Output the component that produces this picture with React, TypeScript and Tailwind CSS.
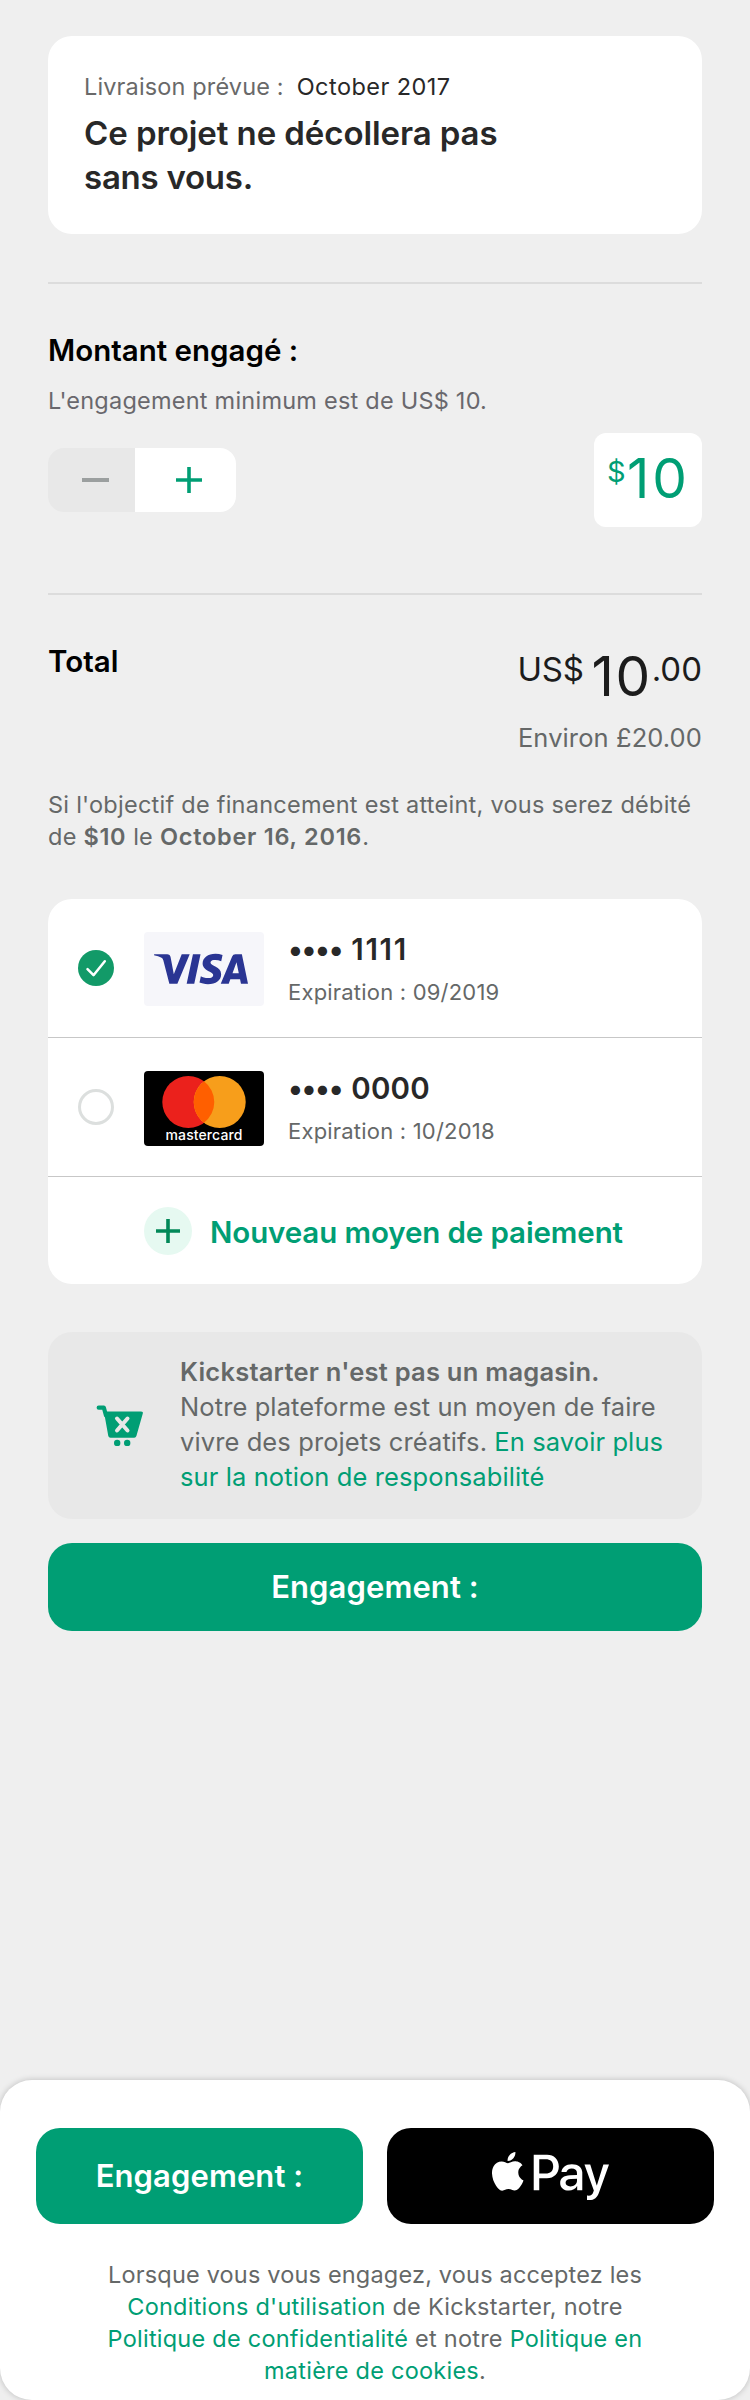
import type { ReactNode } from "react";
import { FaApplePay } from "react-icons/fa";
import { SiVisa } from "react-icons/si";

function Line({ className = "", children }: { className?: string; children: ReactNode }) {
  return <span className={`block whitespace-nowrap ${className}`}>{children}</span>;
}

function Link({ children }: { children: ReactNode }) {
  return <a className="text-[#009e74]">{children}</a>;
}

function CheckedIcon() {
  return (
    <svg className="size-9" viewBox="0 0 36 36" fill="none">
      <circle cx="18" cy="18" r="18" fill="#129a68" />
      <path d="M9.500 19.200 15.500 25.200 26.800 11.200" stroke="#fff" strokeWidth="2.500" strokeLinecap="round" strokeLinejoin="round" />
    </svg>
  );
}

function CartIcon() {
  return (
    <svg className="h-[42px] w-[48px]" viewBox="0 0 48 42" fill="none">
      <path d="M2.700 2.700h5.200l2 7.500" stroke="#009e74" strokeWidth="4.200" strokeLinecap="round" strokeLinejoin="round" />
      <path d="M7.900 6.500H45Q47.400 6.600 46.800 8.500L40.400 31Q39.900 32.700 38.200 32.700H14.500Q12.700 32.700 12.300 31Z" fill="#009e74" />
      <path d="M21 13.500 31.500 25.500M31.500 13.500 21 25.500" stroke="#e8e8e8" strokeWidth="4" strokeLinecap="round" />
      <circle cx="21.200" cy="37.900" r="3.200" fill="#009e74" />
      <circle cx="31.200" cy="37.900" r="3.200" fill="#009e74" />
    </svg>
  );
}

function VisaCard() {
  return (
    <div className="flex h-[74px] w-[120px] items-center justify-center rounded bg-[#f6f6fa] pr-[6px]">
      <SiVisa className="size-[94px] text-[#2a3593]" />
    </div>
  );
}

function MasterCard() {
  return (
    <div className="flex h-[75px] w-[120px] flex-col items-center rounded bg-black pt-[5px]">
      <svg className="h-[52px] w-[84px] shrink-0" viewBox="0 0 84 52">
        <circle cx="26.300" cy="26" r="26" fill="#eb211c" />
        <circle cx="57.700" cy="26" r="26" fill="#f79e1b" />
        <path d="M42 5.300a26 26 0 0 1 0 41.400a26 26 0 0 1 0-41.400Z" fill="#ff5f00" />
      </svg>
      <span className="-mt-px text-[14px] leading-[15px] font-medium tracking-[0.100px] text-white">mastercard</span>
    </div>
  );
}

function PaymentRow({ selected, card, digits, expiration }: { selected?: boolean; card: ReactNode; digits: ReactNode; expiration: string }) {
  return (
    <div className="flex h-[139px] border-b border-[#c7c7c7] pl-[30px]">
      <div className="mt-[51px] size-9">
        {selected ? <CheckedIcon /> : <div className="size-9 rounded-full border-[3.500px] border-[#dcdfde]" />}
      </div>
      <div className="mt-[33px] ml-[30px]">{card}</div>
      <div className="ml-6 pt-8">
        <div className="flex text-[29.500px] leading-9 font-semibold whitespace-nowrap text-[#282828]">
          <span className="mr-[9px] tracking-[-1.300px]">••••</span>
          {digits}
        </div>
        <Line className="mt-[11px] text-[22px] leading-7 tracking-[0.200px] text-[#656868]">Expiration : {expiration}</Line>
      </div>
    </div>
  );
}

export default function App() {
  return (
    <div className="flex h-[2400px] w-[750px] flex-col bg-[#efefef] font-[Inter,sans-serif]">
      <main className="flex flex-1 flex-col px-12 pt-9">
        <section className="h-[198px] rounded-3xl bg-white pt-[35px] pl-9">
          <div className="flex gap-[13px] text-[23.500px] leading-8 whitespace-nowrap">
            <span className="tracking-[0.140px] text-[#696969]">Livraison prévue :</span>
            <span className="tracking-[0.450px] text-[#282828]">October 2017</span>
          </div>
          <h1 className="mt-2 text-[33px] leading-[44px] font-semibold tracking-[-0.080px] text-[#282828]">
            <Line>Ce projet ne décollera pas</Line>
            <Line className="tracking-[-0.250px]">sans vous.</Line>
          </h1>
        </section>

        <hr className="mt-12 h-0.5 border-0 bg-[#dcdcdc]" />

        <section className="mt-12">
          <h2 className="text-[29.500px] leading-9 font-semibold text-black">Montant engagé :</h2>
          <Line className="mt-[17px] text-[23.500px] leading-8 tracking-[0.230px] text-[#69686d]">L'engagement minimum est de US$ 10.</Line>
          <div className="mt-4 flex items-center justify-between">
            <div className="flex h-16 w-[188px] overflow-hidden rounded-2xl">
              <button className="flex w-[87px] items-center bg-[#e8e8e8] pl-[34px]">
                <span className="h-1 w-[27px] bg-[#9b9f9f]" />
              </button>
              <button className="flex flex-1 items-center bg-white pl-[41px]">
                <svg className="size-[26px]" viewBox="0 0 26 26" stroke="#009e74" strokeWidth="3.600">
                  <path d="M0 13H26M13 0V26" />
                </svg>
              </button>
            </div>
            <div className="flex h-[94px] w-[108px] items-start rounded-xl bg-white pt-[15px] pl-[13px] text-[#009e74]">
              <span className="mt-[5px] w-5 text-[29px] leading-[38px]">$</span>
              <span className="text-[55px] leading-[60px] tracking-[3px]">10</span>
            </div>
          </div>
        </section>

        <hr className="mt-[66px] h-0.5 border-0 bg-[#dcdcdc]" />

        <section className="mt-12 flex justify-between">
          <h2 className="text-[29.500px] leading-9 font-semibold text-black">Total</h2>
          <div className="flex flex-col items-end pt-[3px]">
            <div className="flex text-[33px] leading-[44px] text-[#1c1c1c]">
              <span className="mt-px tracking-[-0.300px]">US$</span>
              <span className="ml-2 text-[55px] leading-[60px] tracking-[1.500px]">10</span>
              <span className="mt-px">.00</span>
            </div>
            <Line className="mt-4 text-[25.500px] leading-8 tracking-[0.100px] text-[#656868]">Environ £20.00</Line>
          </div>
        </section>

        <p className="mt-[35px] text-[23.500px] leading-8 tracking-[0.250px] text-[#656868]">
          <Line>Si l'objectif de financement est atteint, vous serez débité</Line>
          <Line>
            de <b className="font-semibold tracking-[0.700px]">$10</b> le{" "}
            <b className="font-semibold tracking-[0.750px]">October 16, 2016</b>.
          </Line>
        </p>

        <section className="mt-[46px] rounded-3xl bg-white">
          <PaymentRow selected card={<VisaCard />} digits={<span className="tracking-[1.700px]">1111</span>} expiration="09/2019" />
          <PaymentRow card={<MasterCard />} digits={<span className="tracking-[0.200px]">0000</span>} expiration="10/2018" />
          <div className="flex h-[107px] pt-[30px] pl-24">
            <div className="flex size-12 items-center justify-center rounded-full bg-[#e6f9f1]">
              <svg className="size-6" viewBox="0 0 24 24" stroke="#028858" strokeWidth="3.600">
                <path d="M0 12H24M12 0V24" />
              </svg>
            </div>
            <Line className="mt-[7px] ml-[18px] text-[29.500px] leading-9 font-semibold tracking-[-0.110px] text-[#009e74]">Nouveau moyen de paiement</Line>
          </div>
        </section>

        <section className="mt-12 flex h-[187px] rounded-3xl bg-[#e8e8e8] pl-[48px]">
          <div className="mt-[73px]">
            <CartIcon />
          </div>
          <p className="mt-[22px] ml-[36px] text-[25.500px] leading-[35px] tracking-[0.100px] text-[#656868]">
            <Line className="font-semibold tracking-[0.230px]">Kickstarter n'est pas un magasin.</Line>
            <Line>Notre plateforme est un moyen de faire</Line>
            <Line>
              vivre des projets créatifs. <Link>En savoir plus</Link>
            </Line>
            <Line>
              <Link>sur la notion de responsabilité</Link>
            </Line>
          </p>
        </section>

        <button className="mt-6 h-[88px] rounded-3xl bg-[#009e74] text-[31px] leading-9 font-semibold tracking-[0.100px] text-white">Engagement :</button>
      </main>

      <footer className="h-[320px] rounded-[32px] bg-white px-9 pt-12 shadow-[0_0_6px_rgba(0,0,0,0.22)]">
        <div className="flex gap-6">
          <button className="h-24 flex-1 rounded-3xl bg-[#009e74] text-[31px] leading-9 font-semibold tracking-[0.100px] text-white">Engagement :</button>
          <button className="flex h-24 flex-1 items-center justify-center rounded-3xl bg-black text-white">
            <FaApplePay className="h-[94px] w-[117px]" />
          </button>
        </div>
        <p className="mt-[35px] text-center text-[23.500px] leading-8 tracking-[0.240px] text-[#656868]">
          <Line className="tracking-[0.180px]">Lorsque vous vous engagez, vous acceptez les</Line>
          <Line>
            <Link>Conditions d'utilisation</Link> de Kickstarter, notre
          </Line>
          <Line>
            <Link>Politique de confidentialité</Link> et notre <Link>Politique en</Link>
          </Line>
          <Line>
            <Link>matière de cookies</Link>.
          </Line>
        </p>
      </footer>
    </div>
  );
}
